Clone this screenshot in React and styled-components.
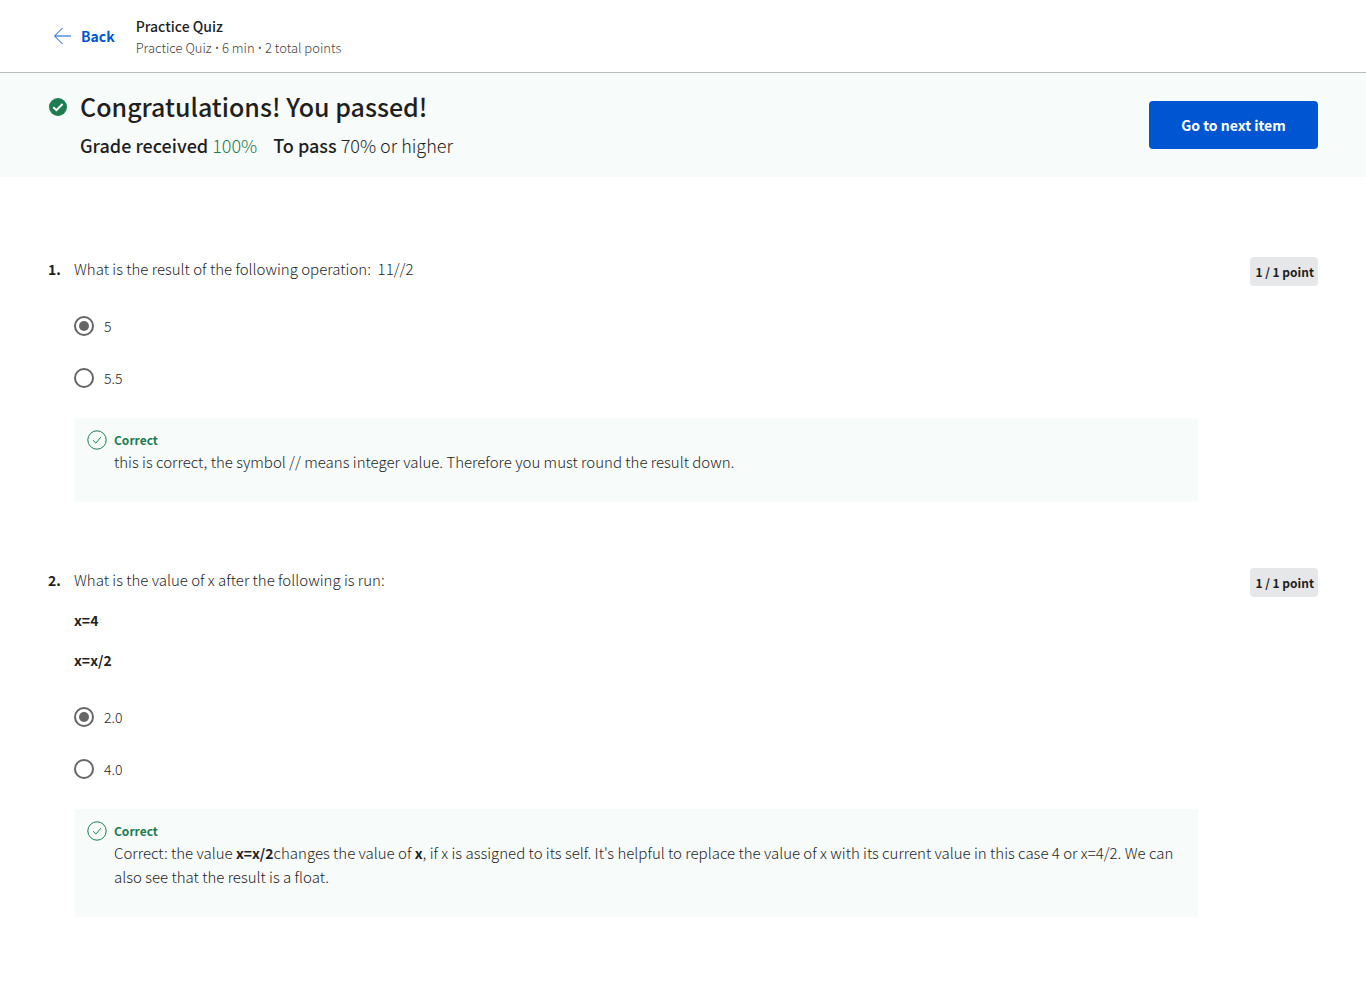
import React from "react";
import styled, { createGlobalStyle } from "styled-components";

const GlobalStyle = createGlobalStyle`
  *, *::before, *::after { box-sizing: border-box; }
  body {
    margin: 0;
    background: #fff;
    color: #1f1f1f;
    font-family: "Source Sans Pro", "Noto Sans CJK SC", "Noto Sans", sans-serif;
    font-size: 14px;
    line-height: 24px;
  }
  h1, h2, p { margin: 0; }
`;

const Header = styled.header`
  display: flex;
  align-items: center;
  gap: 21px;
  min-height: 73px;
  padding: 0 48px;
  border-bottom: 1px solid #bbb;
`;

const BackLink = styled.a`
  display: flex;
  align-items: center;
  gap: 9px;
  padding-left: 4px;
  color: #0056d2;
  font-weight: 700;
  text-decoration: none;
`;

const ItemTitle = styled.h2`
  font-size: 14px;
  line-height: 24px;
  font-weight: 500;
`;

const ItemMeta = styled.p`
  font-size: 13px;
  line-height: 20px;
  font-weight: 300;
  color: #444;
`;

const Bullet = styled.span`
  font-family: "Open Sans", sans-serif;
  font-size: 12px;
`;

const Banner = styled.section`
  display: flex;
  align-items: center;
  justify-content: space-between;
  min-height: 104px;
  padding: 0 48px;
  background: #f7fbfa;
`;

const Result = styled.div`
  display: grid;
  grid-template-columns: 20px 1fr;
  column-gap: 12px;
  row-gap: 8px;
  align-items: center;
`;

const ResultTitle = styled.h1`
  font-size: 25px;
  line-height: 32px;
  font-weight: 500;
`;

const Grades = styled.div`
  grid-column: 2;
  display: flex;
  flex-wrap: wrap;
  column-gap: 16px;
  font-size: 18px;
  line-height: 30px;
  font-weight: 300;
`;

const GradeLabel = styled.span`
  font-weight: 500;
`;

const GradeValue = styled.span`
  color: ${(p) => (p.$passed ? "#1d7c50" : "inherit")};
`;

const NextButton = styled.button`
  min-width: 169px;
  height: 48px;
  padding: 0 32px;
  border: 0;
  border-radius: 4px;
  background: #0056d2;
  color: #fff;
  font: inherit;
  font-weight: 700;
  white-space: nowrap;
`;

const Questions = styled.main`
  display: flex;
  flex-direction: column;
  gap: 66px;
  padding: 80px 48px 64px;
`;

const Question = styled.section`
  display: grid;
  grid-template-columns: 26px 1fr 120px;
  align-items: start;
`;

const Num = styled.span`
  font-weight: 700;
`;

const Prompt = styled.div`
  display: flex;
  flex-direction: column;
  gap: 16px;
  font-size: 15px;
  font-weight: 300;
`;

const Strong = styled.strong`
  font-size: 14px;
  font-weight: 700;
`;

const Options = styled.div`
  margin: 19px 0 14px;
`;

const Option = styled.label`
  display: flex;
  align-items: center;
  gap: 10px;
  height: 52px;
  font-size: 14px;
  font-weight: 300;
`;

const Radio = styled.input`
  appearance: none;
  display: grid;
  place-items: center;
  width: 20px;
  height: 20px;
  margin: 0;
  border: 2px solid #666;
  border-radius: 50%;
  background: #fff;

  &:checked::before {
    content: "";
    width: 10px;
    height: 10px;
    border-radius: 50%;
    background: #666;
  }
`;

const Feedback = styled.div`
  display: grid;
  grid-template-columns: 20px 1fr;
  column-gap: 7px;
  margin-left: 1px;
  padding: 12px 12px 28px;
  background: #f7fbfa;
`;

const FeedbackTitle = styled.p`
  color: #1d7c50;
  font-size: 12px;
  line-height: 20px;
  font-weight: 700;
`;

const FeedbackText = styled.p`
  font-size: 15px;
  font-weight: 300;
`;

const Points = styled.span`
  justify-self: end;
  padding: 0 4px 0 5px;
  border-radius: 4px;
  background: #e5e7e8;
  font-size: 12px;
  line-height: 29px;
  font-weight: 700;
  white-space: nowrap;
`;

const PassedSvg = styled.svg`
  margin-top: 2px;
`;

const ArrowIcon = () => (
  <svg width="20" height="20" viewBox="0 0 20 20" fill="none" stroke="#0056d2" aria-hidden="true">
    <path d="M19 10H3M10.5 2L2.5 10l8 8" />
  </svg>
);

const PassedIcon = () => (
  <PassedSvg width="20" height="20" viewBox="0 0 20 20" aria-hidden="true">
    <circle cx="10" cy="10" r="9" fill="#1d7c50" />
    <path d="M5.3 10.2l3.1 3 6.2-6.2" fill="none" stroke="#fff" strokeWidth="2" />
  </PassedSvg>
);

const CorrectIcon = () => (
  <svg width="20" height="20" viewBox="0 0 20 20" fill="none" stroke="#1d7c50" aria-hidden="true">
    <circle cx="10" cy="10" r="9.2" />
    <path d="M6 10.3l2.9 2.8 5-6" />
  </svg>
);

const questions = [
  {
    prompt: ["What is the result of the following operation:\u00a0 11//2"],
    options: ["5", "5.5"],
    feedback:
      "this is correct, the symbol // means integer value. Therefore you must round the result down.",
  },
  {
    prompt: [
      "What is the value of x after the following is run:",
      <Strong key="a">x=4</Strong>,
      <Strong key="b">x=x/2</Strong>,
    ],
    options: ["2.0", "4.0"],
    feedback: (
      <>
        Correct: the value <Strong>x=x/2</Strong>changes the value of <Strong>x</Strong>, if x is
        assigned to its self. It's helpful to replace the value of x with its current value in this
        case 4 or x=4/2. We can also see that the result is a float.
      </>
    ),
  },
];

export default function App() {
  return (
    <>
      <GlobalStyle />
      <Header>
        <BackLink href="#">
          <ArrowIcon />
          Back
        </BackLink>
        <div>
          <ItemTitle>Practice Quiz</ItemTitle>
          <ItemMeta>
            Practice Quiz <Bullet>•</Bullet> 6 min <Bullet>•</Bullet> 2 total points
          </ItemMeta>
        </div>
      </Header>
      <Banner>
        <Result>
          <PassedIcon />
          <ResultTitle>Congratulations! You passed!</ResultTitle>
          <Grades>
            <span>
              <GradeLabel>Grade received</GradeLabel> <GradeValue $passed>100%</GradeValue>
            </span>
            <span>
              <GradeLabel>To pass</GradeLabel> <GradeValue>70% or higher</GradeValue>
            </span>
          </Grades>
        </Result>
        <NextButton type="button">Go to next item</NextButton>
      </Banner>
      <Questions>
        {questions.map((q, i) => (
          <Question key={i}>
            <Num>{i + 1}.</Num>
            <div>
              <Prompt>
                {q.prompt.map((line, j) => (
                  <p key={j}>{line}</p>
                ))}
              </Prompt>
              <Options role="radiogroup" aria-label={`Question ${i + 1}`}>
                {q.options.map((option, j) => (
                  <Option key={option}>
                    <Radio type="radio" name={`question-${i}`} defaultChecked={j === 0} />
                    {option}
                  </Option>
                ))}
              </Options>
              <Feedback>
                <CorrectIcon />
                <div>
                  <FeedbackTitle>Correct</FeedbackTitle>
                  <FeedbackText>{q.feedback}</FeedbackText>
                </div>
              </Feedback>
            </div>
            <Points>1 / 1 point</Points>
          </Question>
        ))}
      </Questions>
    </>
  );
}
